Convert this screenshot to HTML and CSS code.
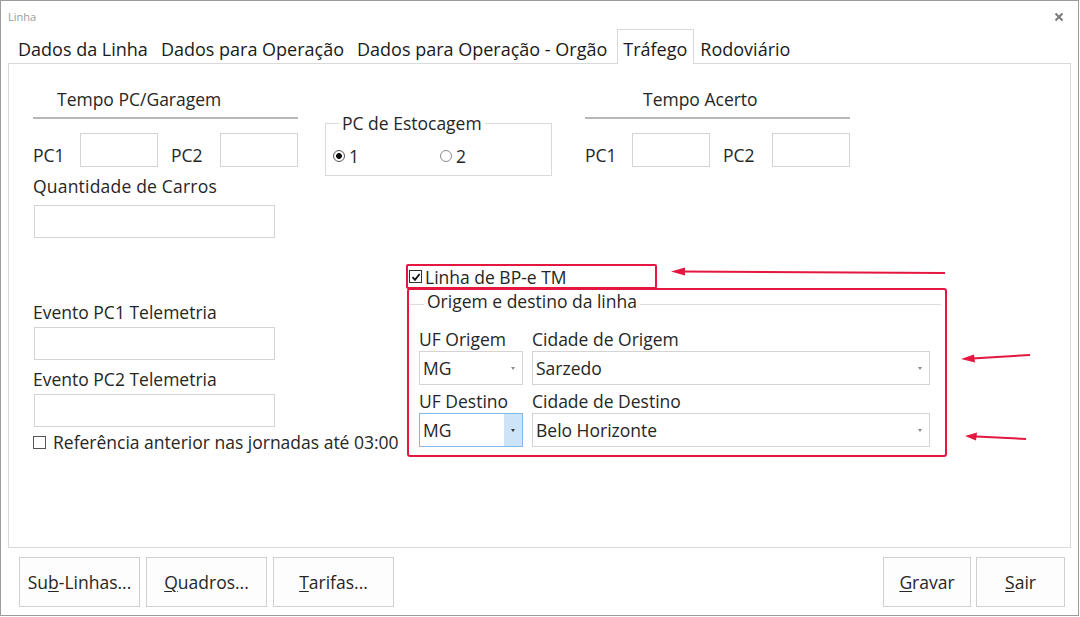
FILE: index.html
```html
<!DOCTYPE html>
<html lang="pt-BR">
<head>
  <meta charset="UTF-8">
  <title>Linha</title>
  <link rel="stylesheet" href="styles.css">
</head>
<body>

<div class="window">
  <div class="titlebar">
    <span class="title">Linha</span>
    <svg class="close" viewBox="0 0 10 10" width="10" height="10">
      <path d="M1.5 1.5 L8.5 8.5 M8.5 1.5 L1.5 8.5" stroke="#7a7a7a" stroke-width="2"/>
    </svg>
  </div>

  <div class="tabs">
    <div class="tab">Dados da Linha</div>
    <div class="tab">Dados para Operação</div>
    <div class="tab">Dados para Operação - Orgão</div>
    <div class="tab active">Tráfego</div>
    <div class="tab">Rodoviário</div>
  </div>

  <div class="panel">
    <!-- linha de cima: tempos e estocagem -->
    <div class="top">
      <div class="col-left">
        <div class="group-title">Tempo PC/Garagem</div>
        <div class="pair">
          <span class="pc">PC1</span>
          <div class="field short"></div>
          <span class="pc pc2">PC2</span>
          <div class="field short"></div>
        </div>
        <span class="lbl qtd">Quantidade de Carros</span>
        <div class="field wide qtd-field"></div>
      </div>

      <fieldset class="estoc">
        <legend>PC de Estocagem</legend>
        <label class="radio first"><span class="dot on"></span>1</label>
        <label class="radio"><span class="dot"></span>2</label>
      </fieldset>

      <div class="col-left acerto">
        <div class="group-title">Tempo Acerto</div>
        <div class="pair">
          <span class="pc">PC1</span>
          <div class="field short"></div>
          <span class="pc pc2">PC2</span>
          <div class="field short"></div>
        </div>
      </div>
    </div>

    <!-- parte de baixo: telemetria e origem/destino -->
    <div class="bottom">
      <div class="col-tele">
        <span class="lbl ev1">Evento PC1 Telemetria</span>
        <div class="field wide ev-field"></div>
        <span class="lbl ev2">Evento PC2 Telemetria</span>
        <div class="field wide ev-field"></div>
        <label class="check ref"><span class="box"></span>Referência anterior nas jornadas até 03:00</label>
      </div>

      <div class="col-right">
        <div class="mark bpe">
          <label class="check"><span class="box checked">
            <svg viewBox="0 0 10 10" width="10" height="10"><path d="M1.5 5.2 L4 7.8 L8.6 2" fill="none" stroke="#111" stroke-width="1.8"/></svg>
          </span>Linha de BP-e TM</label>
        </div>
        <div class="mark origin">
          <div class="origin-title"><span>Origem e destino da linha</span></div>
          <div class="sel-grid">
            <span class="lbl-sm">UF Origem</span>
            <span class="lbl-sm">Cidade de Origem</span>
            <div class="select"><span>MG</span><span class="caret"></span></div>
            <div class="select"><span>Sarzedo</span><span class="caret"></span></div>
            <span class="lbl-sm second">UF Destino</span>
            <span class="lbl-sm second">Cidade de Destino</span>
            <div class="select focus"><span>MG</span><span class="caret"></span></div>
            <div class="select"><span>Belo Horizonte</span><span class="caret"></span></div>
          </div>
        </div>
      </div>
    </div>
  </div>

  <div class="footer">
    <div class="btn">Su<u>b</u>-Linhas...</div>
    <div class="btn"><u>Q</u>uadros...</div>
    <div class="btn"><u>T</u>arifas...</div>
    <div class="spacer"></div>
    <div class="btn small"><u>G</u>ravar</div>
    <div class="btn small"><u>S</u>air</div>
  </div>

  <!-- setas vermelhas de destaque -->
  <svg class="arrows" width="1079" height="616" viewBox="0 0 1079 616">
    <g stroke="#e3173f" stroke-width="2" fill="#e3173f">
      <line x1="944" y1="272" x2="682" y2="270.5"/>
      <polygon points="670,270.5 684,266.5 684,274.5" stroke="none"/>
      <line x1="1029" y1="354" x2="971" y2="357.5"/>
      <polygon points="960,358 973,353.5 974,361.5" stroke="none"/>
      <line x1="1025" y1="438" x2="975" y2="435.5"/>
      <polygon points="964,435 976,431.5 975,439.5" stroke="none"/>
    </g>
  </svg>
</div>

</body>
</html>
```

FILE: styles.css
```css
* { box-sizing: border-box; margin: 0; padding: 0; }
body { background: #fff; font-family: "Open Sans", "Segoe UI", sans-serif; font-size: 17.5px; color: #262626; }

.window {
  position: relative;
  width: 1079px;
  height: 616px;
  border: 1px solid #9b9b9b;
  background: #fff;
}

/* barra de título */
.titlebar {
  height: 28px;
  display: flex;
  justify-content: space-between;
  align-items: flex-start;
  padding: 0 14px 0 7px;
}
.title { font-size: 11px; line-height: 14px; padding-top: 9px; color: #9a9a9a; }
.close { margin-top: 11px; }

/* abas */
.tabs {
  position: relative;
  z-index: 1;
  display: flex;
  align-items: flex-start;
  height: 34px;
  padding-left: 10.5px;
  font-size: 18px;
}
.tab {
  padding: 8px 6.5px 0;
  line-height: 24px;
  white-space: nowrap;
  color: #1a1a1a;
}
.tab.active {
  height: 35px;
  margin-left: 3px;
  padding: 7px 5.5px 0;
  border: 1px solid #d9d9d9;
  border-bottom: none;
  background: #fff;
}

.panel {
  margin-left: 7px;
  width: 1063px;
  height: 485px;
  border: 1px solid #d9d9d9;
  padding: 23px 0 0 24px;
}

.top { display: flex; align-items: flex-start; }
.col-left { width: 265px; }
.acerto { margin-left: 33px; }
.group-title {
  line-height: 24px;
  padding: 0 0 6px 24px;
  border-bottom: 2px solid #b8b8b8;
}
.acerto .group-title { padding-left: 58px; }

.pair { display: flex; align-items: flex-end; margin-top: 14px; height: 34px; }
.pc { width: 47px; line-height: 24px; }
.pc2 { margin-left: 13px; width: 49px; }

.field { border: 1px solid #d4d4d4; background: #fff; }
.field.short { width: 78px; height: 34px; }
.field.wide { width: 241px; height: 33px; margin-left: 1px; }

.lbl { display: block; line-height: 24px; }
.qtd { margin-top: 7px; letter-spacing: 0.2px; }
.qtd-field { margin-top: 7px; }

/* grupo PC de Estocagem */
.estoc {
  margin: 24px 0 0 27px;
  width: 227px;
  border: 1px solid #dadada;
  padding: 9px 7px 7px;
  display: flex;
}
.estoc legend { margin-left: 6px; padding: 0 3px; line-height: 24px; }
.radio { display: inline-flex; align-items: center; line-height: 24px; }
.radio.first { width: 107px; }
.dot {
  width: 12px; height: 12px;
  border: 1px solid #8a8a8a;
  border-radius: 50%;
  margin-right: 4px;
  background: #fff;
}
.dot.on { border-color: #555; background: radial-gradient(circle, #111 0 2.6px, #fff 3.2px); }

.bottom { display: flex; align-items: flex-start; }
.col-tele { width: 373px; padding-top: 62px; }
.ev-field { margin-top: 3px; }
.ev2 { margin-top: 7px; }

.check { display: flex; align-items: center; line-height: 24px; white-space: nowrap; }
.box {
  width: 13px; height: 13px;
  border: 1px solid #555;
  margin-right: 7px;
  display: flex; align-items: center; justify-content: center;
  background: #fff;
}
.box.checked { border-color: #333; margin-right: 3px; }
.ref { margin-top: 3px; }

/* marcações em vermelho */
.col-right { padding-top: 26px; }
.mark { border: 2px solid #e3173f; border-radius: 2px; }
.bpe { width: 251px; height: 25px; display: flex; align-items: center; padding-left: 1px; }
.origin { margin: -1px 0 0 1px; width: 540px; height: 169px; border-radius: 3px; }

.origin-title {
  display: flex;
  align-items: center;
  height: 22px;
  padding: 0 4px 0 1px;
  line-height: 22px;
}
.origin-title::before,
.origin-title::after {
  content: "";
  height: 1px;
  background: #dcdcdc;
  margin-top: 6px;
}
.origin-title::before { width: 14px; }
.origin-title::after { flex: 1; }
.origin-title span { padding: 0 3px; }

.sel-grid {
  display: grid;
  grid-template-columns: 104px 398px;
  column-gap: 9px;
  padding: 17px 0 0 10px;
}
.lbl-sm { line-height: 20px; white-space: nowrap; }
.lbl-sm.second { margin-top: 6px; }

.select {
  display: flex;
  justify-content: space-between;
  height: 34px;
  margin-top: 2px;
  border: 1px solid #d4d4d4;
  padding-left: 3px;
  line-height: 32px;
}
.caret {
  width: 18px;
  display: flex;
  align-items: center;
  justify-content: center;
}
.caret::after {
  content: "";
  border-left: 2.5px solid transparent;
  border-right: 2.5px solid transparent;
  border-top: 3px solid #8a8a8a;
}
.select.focus { border-color: #86b8e8; }
.select.focus .caret { background: #cce4f7; }
.select.focus .caret::after { border-top-color: #333; }

/* botões do rodapé */
.footer { display: flex; padding: 9px 13px 0 18px; }
.btn {
  width: 121px;
  height: 50px;
  border: 1px solid #d0d0d0;
  background: #fdfdfd;
  display: flex;
  align-items: center;
  justify-content: center;
}
.btn + .btn { margin-left: 6px; }
.spacer { flex: 1; }
.btn.small { width: 88px; }
.btn.small + .btn.small { width: 89px; margin-left: 5px; }
.btn u { text-underline-offset: 2px; text-decoration-thickness: 1px; }

.arrows { position: absolute; left: 0; top: 0; pointer-events: none; }
```
